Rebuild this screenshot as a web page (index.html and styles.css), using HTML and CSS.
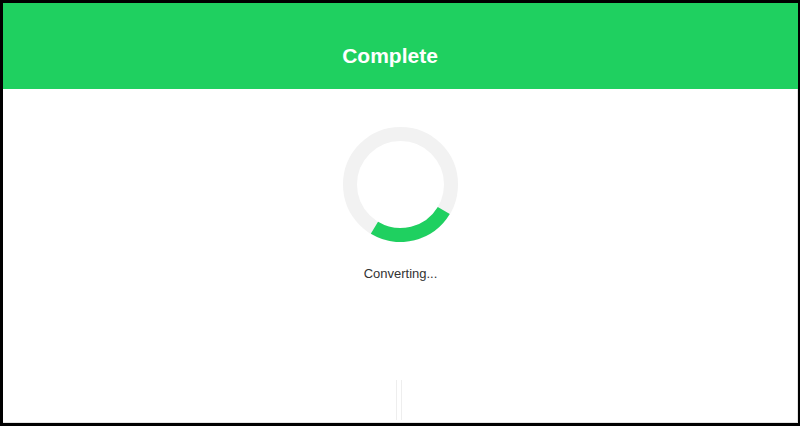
FILE: index.html
```html
<!DOCTYPE html>
<html lang="en">
<head>
<meta charset="utf-8">
<title>Complete</title>
<link rel="stylesheet" href="styles.css">
</head>
<body>
<div class="frame">
  <header class="header">
    <h1 class="title">Complete</h1>
  </header>
  <main class="content">
    <svg class="spinner" width="115" height="115" viewBox="0 0 115 115" aria-hidden="true">
      <circle cx="57.5" cy="57.5" r="50.5" fill="none" stroke="#f2f2f2" stroke-width="14"/>
      <circle cx="57.5" cy="57.5" r="50.5" fill="none" stroke="#1fd060" stroke-width="14"
        stroke-dasharray="79.3 400" transform="rotate(31 57.5 57.5)"/>
    </svg>
    <p class="status">Converting...</p>
    <div class="divider"><span></span><span></span></div>
  </main>
</div>
</body>
</html>
```

FILE: styles.css
```css
html, body {
  margin: 0;
  padding: 0;
  background: #000;
  width: 800px;
  height: 426px;
  overflow: hidden;
}

.frame {
  margin: 3px 2px 3px 3px;
  width: 795px;
  height: 420px;
  background: #fff;
  display: flex;
  flex-direction: column;
  font-family: "Liberation Sans", Arial, sans-serif;
  position: relative;
}

.header {
  height: 86px;
  background: #1fd060;
  display: flex;
  align-items: center;
  justify-content: center;
  padding-right: 21px;
  padding-top: 20px;
  box-sizing: border-box;
}

.title {
  margin: 0;
  color: #fff;
  font-size: 21px;
  font-weight: bold;
  line-height: 24px;
}

.content {
  flex: 1;
  display: flex;
  flex-direction: column;
  align-items: center;
  padding-top: 38px;
  padding-left: 1px;
  border-right: 1px solid #e4e4e4;
  border-bottom: 1px solid #e4e4e4;
  position: relative;
}

.spinner {
  display: block;
}

.status {
  margin: 24px 0 0;
  font-size: 13px;
  line-height: 15px;
  color: #333;
}

.divider {
  position: absolute;
  left: 393px;
  top: 291px;
  width: 6px;
  height: 40px;
  display: flex;
  justify-content: space-between;
}

.divider span {
  width: 1px;
  height: 100%;
  background: #eeeeee;
}
```
